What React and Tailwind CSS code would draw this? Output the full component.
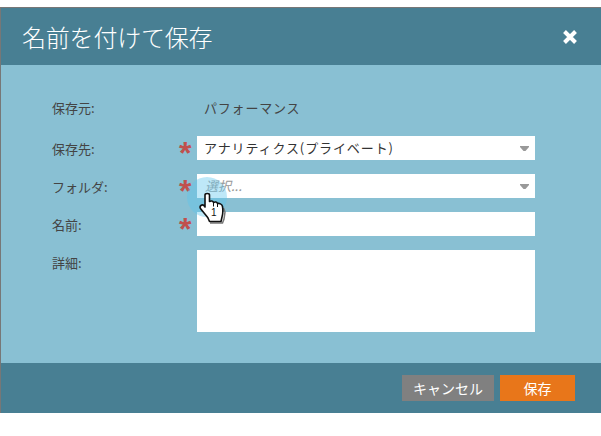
import React from 'react';

const Required = () => (
  <span className="w-5 h-6 pl-[2px] text-[#c0504d] text-[32px] font-bold leading-[34px] font-['Liberation_Sans',sans-serif]">*</span>
);

const Arrow = () => (
  <svg width="9" height="5" viewBox="0 0 9 5" className="absolute right-[6px] top-[10px]">
    <path d="M0 0H9V1L5.5 5H3.5L0 1Z" fill="#999999" />
  </svg>
);

const FormRow = ({ label, required, children }) => (
  <div className="flex items-start">
    <span className="w-[176px] h-6 pl-[51px] pt-px text-[13px] leading-6 text-[#444] shrink-0">{label}</span>
    {required ? <Required /> : <span className="w-5" />}
    {children}
  </div>
);

const HandCursor = () => (
  <div className="absolute left-[187px] top-[177px] w-10 h-10 rounded-full bg-[#5cc6ee]/40">
    <svg width="28" height="34" viewBox="0 0 28 34" className="absolute left-[12px] top-[15px]">
      <path d="M24.5 16L26 20L25 27L23.5 31H11" fill="none" stroke="#777777" strokeWidth="1.5" />
      <path
        d="M6 3C6 1 10.5 1 10.5 3V9.5C12 8.5 14 9 14.5 10.5C16 9.5 18 10 18.5 11.5C20 11 23 12 23.5 14.5C24 18 24 22 23 25L22 29.5H10.5L9 26C7 23 4 20 1.5 16.5C0 14 3 12 5 13.5L6 15Z"
        fill="#ffffff"
        stroke="#111111"
        strokeWidth="1.6"
        strokeLinejoin="round"
      />
      <path d="M14.5 10.5V14.5M18.5 11.5V15" stroke="#111111" strokeWidth="1" />
      <text x="12" y="24" fontSize="10" fontFamily="Liberation Sans, sans-serif" fill="#111111">1</text>
    </svg>
  </div>
);

const App = () => (
  <div className="relative h-[436px] w-[601px] bg-white pt-[7px] overflow-hidden font-['Noto_Sans_CJK_JP','Noto_Sans',sans-serif]">
    <div className="border-t border-l border-[#777777]">
      <div className="h-[57px] bg-[#487f93] flex items-center justify-between pl-[21px] pr-[23px]">
        <h1 className="text-[24px] leading-8 text-white font-light tracking-[-0.2px]">名前を付けて保存</h1>
        <svg width="16" height="16" viewBox="0 0 16 16">
          <path d="M2.5 2.5L13.5 13.5M13.5 2.5L2.5 13.5" stroke="#ffffff" strokeWidth="4" />
        </svg>
      </div>

      <div className="h-[298px] bg-[#89c0d3] pt-[30px] flex flex-col gap-[14px]">
        <FormRow label="保存元:">
          <span className="h-[27px] pl-[7px] pt-px text-[13px] leading-6 text-[#444] tracking-[0.8px]">パフォーマンス</span>
        </FormRow>
        <FormRow label="保存先:" required>
          <div className="relative w-[338px] h-6 bg-white pl-[7px] text-[13px] leading-6 text-[#333] tracking-[0.9px]">
            アナリティクス(プライベート)
            <Arrow />
          </div>
        </FormRow>
        <FormRow label="フォルダ:" required>
          <div className="relative w-[338px] h-6 bg-white pl-[8px] text-[13px] leading-6 italic text-[#999]">
            選択...
            <Arrow />
          </div>
        </FormRow>
        <FormRow label="名前:" required>
          <div className="w-[338px] h-6 bg-white" />
        </FormRow>
        <FormRow label="詳細:">
          <div className="w-[338px] h-[82px] bg-white" />
        </FormRow>
      </div>

      <div className="h-[50px] bg-[#487f93] flex justify-end gap-[6px] pt-[12px] pr-[26px]">
        <button className="w-[92px] h-[26px] bg-[#808080] text-white text-[14px] leading-[26px]">キャンセル</button>
        <button className="w-[75px] h-[26px] bg-[#e8761a] text-white text-[14px] leading-[26px]">保存</button>
      </div>
    </div>
    <HandCursor />
  </div>
);

export default App;
